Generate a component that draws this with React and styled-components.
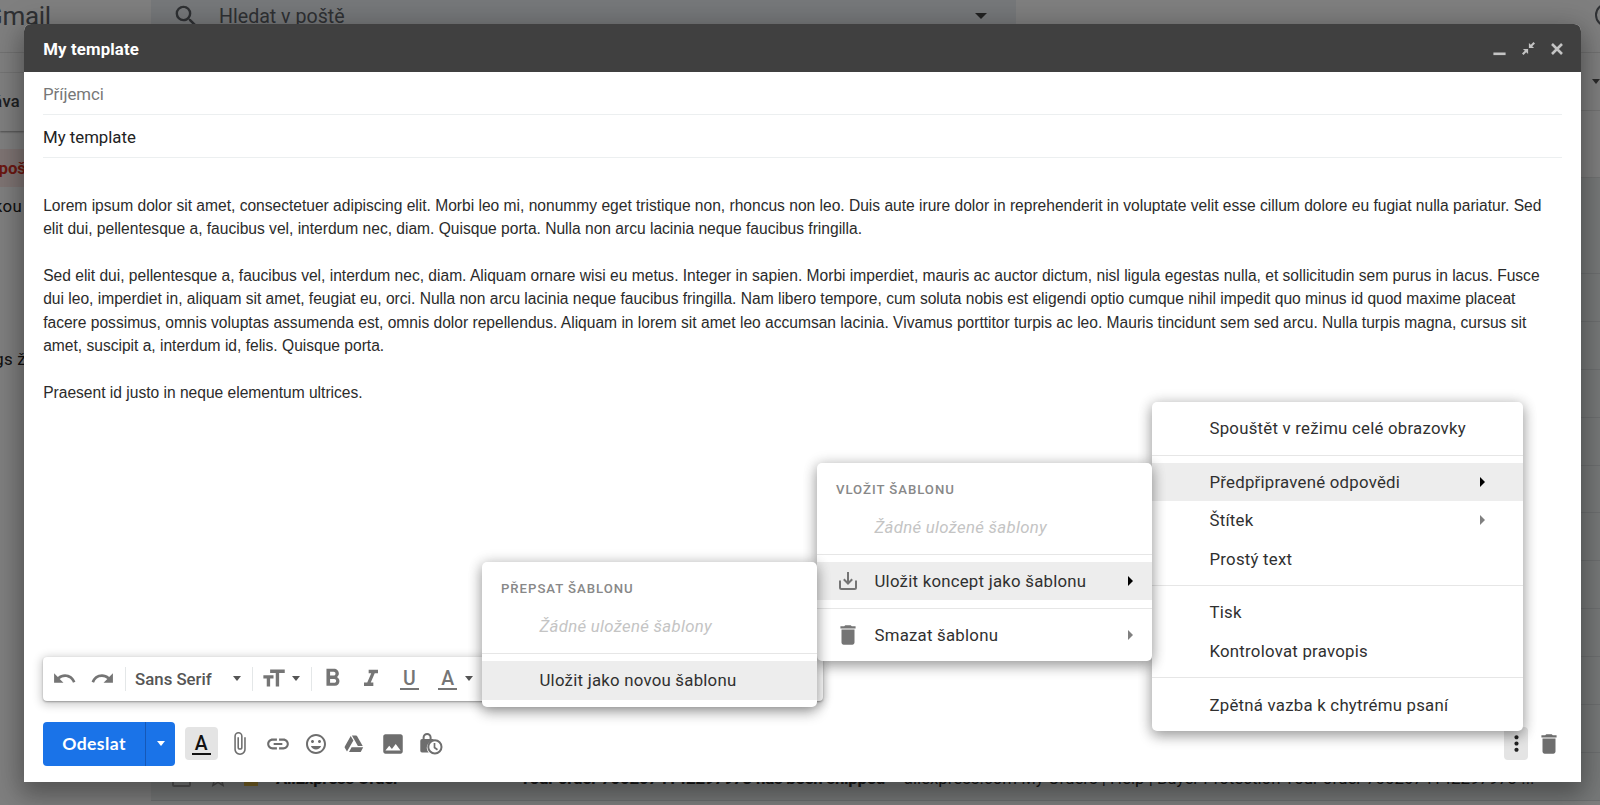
import React from 'react';
import styled, { createGlobalStyle, css } from 'styled-components';
import {
  MdAttachFile,
  MdDelete,
  MdFormatBold,
  MdFormatItalic,
  MdFormatSize,
  MdImage,
  MdInsertLink,
  MdMoreVert,
  MdOutlineInsertEmoticon,
  MdRedo,
  MdSearch,
  MdStarBorder,
  MdUndo,
} from 'react-icons/md';

const paragraphs = [
  'Lorem ipsum dolor sit amet, consectetuer adipiscing elit. Morbi leo mi, nonummy eget tristique non, rhoncus non leo. Duis aute irure dolor in reprehenderit in voluptate velit esse cillum dolore eu fugiat nulla pariatur. Sed elit dui, pellentesque a, faucibus vel, interdum nec, diam. Quisque porta. Nulla non arcu lacinia neque faucibus fringilla.',
  'Sed elit dui, pellentesque a, faucibus vel, interdum nec, diam. Aliquam ornare wisi eu metus. Integer in sapien. Morbi imperdiet, mauris ac auctor dictum, nisl ligula egestas nulla, et sollicitudin sem purus in lacus. Fusce dui leo, imperdiet in, aliquam sit amet, feugiat eu, orci. Nulla non arcu lacinia neque faucibus fringilla. Nam libero tempore, cum soluta nobis est eligendi optio cumque nihil impedit quo minus id quod maxime placeat facere possimus, omnis voluptas assumenda est, omnis dolor repellendus. Aliquam in lorem sit amet leo accumsan lacinia. Vivamus porttitor turpis ac leo. Mauris tincidunt sem sed arcu. Nulla turpis magna, cursus sit amet, suscipit a, interdum id, felis. Quisque porta.',
  'Praesent id justo in neque elementum ultrices.',
];

const DriveIcon = () => (
  <svg width="20" height="18" viewBox="0 0 20 18" fill="currentColor">
    <path d="M6.7 .9 L.8 11.4 Q.4 12 .8 12.7 L3 16.6 L9.4 5.4 Z" />
    <path d="M7.9 .5 H12.1 Q12.7 .5 13 1 L18.7 11 H13.9 Z" />
    <path d="M7.6 12.3 H19.2 L17 16.4 Q16.7 17 16 17 H5 Z" />
  </svg>
);

const LockClockIcon = () => (
  <svg width="24" height="24" viewBox="0 0 24 24" fill="none">
    <path d="M4.6 7.5V5.4a3.5 3.5 0 0 1 7 0v2.1" stroke="currentColor" strokeWidth="2" />
    <path
      fill="currentColor"
      d="M3 7h10.4q1.7 0 1.7 1.5A7.2 7.2 0 0 0 9.7 20.5H3q-1.7 0-1.7-1.7V8.7Q1.3 7 3 7Z"
    />
    <circle cx="15.9" cy="14.9" r="6.6" stroke="currentColor" strokeWidth="2" fill="#fff" />
    <path d="M15.5 11v4.500l3 2.200" stroke="currentColor" strokeWidth="1.700" />
  </svg>
);

const SaveIcon = () => (
  <svg width="20" height="20" viewBox="0 0 20 20" fill="none" stroke="currentColor" strokeWidth="2">
    <path d="M2 9.500v7q0 1.500 1.500 1.500h13q1.500 0 1.500-1.500v-7" />
    <path d="M10 1v11M5.800 8.300L10 12.500l4.200-4.200" />
  </svg>
);

const MinimizeIcon = () => (
  <svg width="13" height="14" viewBox="0 0 13 14">
    <path d="M.4 10.500h12.200v2.600H.4z" fill="currentColor" />
  </svg>
);

const ShrinkIcon = () => (
  <svg width="13" height="13" viewBox="0 0 13 13" fill="currentColor">
    <path d="M6.900 .9L8.800 2.800 11.500 0 13 1.500 10.200 4.200 12.100 6.100H6.900z" />
    <path d="M6.100 12.100L4.200 10.200 1.500 13 0 11.500 2.800 8.800 .9 6.900H6.100z" />
  </svg>
);

const CloseIcon = () => (
  <svg width="12" height="12" viewBox="0 0 12 12" stroke="currentColor" strokeWidth="2.600">
    <path d="M1 1l10 10M11 1L1 11" />
  </svg>
);

const Mailbox = () => (
  <Page>
    <TopBar>
      <Logo>Gmail</Logo>
      <SearchBar>
        <MdSearch size={29} />
        <span>Hledat v poště</span>
        <Caret />
      </SearchBar>
      <HelpCircle />
    </TopBar>
    <PageColumns>
      <Sidebar>
        <SideGap />
        <ComposeLabel>Nová zpráva</ComposeLabel>
        <Inbox>Doručená poš</Inbox>
        <SideItem>S hvězdičkou</SideItem>
        <SideItem $top={115}>Hangouts: gs ž</SideItem>
      </Sidebar>
      <List>
        <ListTools>
          <Caret />
        </ListTools>
        <Tabs />
        <TallRow />
        {Array.from({ length: 10 }).map((_, i) => (
          <MailRow key={i} />
        ))}
        <MailRow>
          <Check />
          <MdStarBorder size={24} />
          <Important />
          <Sender>AliExpress Order</Sender>
          <Subject>Your order 7002674142297973 has been shipped</Subject>
          <Snippet>
            - aliexpress.com My Orders | Help | Buyer Protection Your order 7002674142297973 ...
          </Snippet>
        </MailRow>
      </List>
    </PageColumns>
    <Scrim />
  </Page>
);

const OverwriteMenu = () => (
  <SubMenu>
    <MenuTitle>Přepsat šablonu</MenuTitle>
    <Empty>Žádné uložené šablony</Empty>
    <Separator />
    <Item $active>Uložit jako novou šablonu</Item>
  </SubMenu>
);

const TemplatesMenu = () => (
  <SubMenu>
    <MenuTitle>Vložit šablonu</MenuTitle>
    <Empty>Žádné uložené šablony</Empty>
    <Separator />
    <Item $active>
      <ItemIcon>
        <SaveIcon />
      </ItemIcon>
      Uložit koncept jako šablonu
      <Arrow $active />
      <OverwriteMenu />
    </Item>
    <Separator />
    <Item>
      <ItemIcon>
        <MdDelete size={26} />
      </ItemIcon>
      Smazat šablonu
      <Arrow />
    </Item>
  </SubMenu>
);

const OptionsMenu = () => (
  <MainMenu>
    <Item>Spouštět v režimu celé obrazovky</Item>
    <Separator />
    <Item $active>
      Předpřipravené odpovědi
      <Arrow $active $right={38} />
      <TemplatesMenu />
    </Item>
    <Item>
      Štítek
      <Arrow $right={38} />
    </Item>
    <Item>Prostý text</Item>
    <Separator />
    <Item>Tisk</Item>
    <Item>Kontrolovat pravopis</Item>
    <Separator />
    <Item>Zpětná vazba k chytrému psaní</Item>
  </MainMenu>
);

const FormatBar = () => (
  <Toolbar>
    <ToolButton>
      <MdUndo size={25} />
    </ToolButton>
    <ToolButton>
      <MdRedo size={25} />
    </ToolButton>
    <Divider $left={3} />
    <FontSelect>
      Sans Serif
      <Caret />
    </FontSelect>
    <Divider />
    <SizeSelect>
      <MdFormatSize size={27} />
      <Caret />
    </SizeSelect>
    <Divider />
    <ToolButton $left={2}>
      <MdFormatBold size={29} />
    </ToolButton>
    <ToolButton>
      <MdFormatItalic size={28} />
    </ToolButton>
    <ToolButton>
      <Letter>U</Letter>
    </ToolButton>
    <ToolButton>
      <Letter>A</Letter>
    </ToolButton>
    <ColorCaret />
  </Toolbar>
);

const Compose = () => (
  <Dialog>
    <TitleBar>
      <span>My template</span>
      <MinimizeIcon />
      <ShrinkIcon />
      <CloseIcon />
    </TitleBar>
    <Field $muted>Příjemci</Field>
    <Field>My template</Field>
    <Editor>
      {paragraphs.map((text) => (
        <p key={text}>{text}</p>
      ))}
    </Editor>
    <FormatBar />
    <Footer>
      <SendGroup>
        <SendLabel>Odeslat</SendLabel>
        <SendMore>
          <Caret $color="#fff" />
        </SendMore>
      </SendGroup>
      <Slot>
        <Pressed>
          <Letter $dark>A</Letter>
        </Pressed>
      </Slot>
      <Slot>
        <MdAttachFile size={25} />
      </Slot>
      <Slot>
        <MdInsertLink size={26} />
      </Slot>
      <Slot>
        <MdOutlineInsertEmoticon size={24} />
      </Slot>
      <Slot>
        <DriveIcon />
      </Slot>
      <Slot>
        <MdImage size={26} />
      </Slot>
      <Slot>
        <LockClockIcon />
      </Slot>
      <Spacer />
      <Pressed $narrow>
        <MdMoreVert size={25} />
      </Pressed>
      <TrashSlot>
        <MdDelete size={26} />
      </TrashSlot>
    </Footer>
    <OptionsMenu />
  </Dialog>
);

const App = () => (
  <>
    <GlobalStyle />
    <Mailbox />
    <Compose />
  </>
);

export default App;

const GlobalStyle = createGlobalStyle`
  * {
    box-sizing: border-box;
  }
  body {
    margin: 0;
    overflow: hidden;
    font-family: Roboto, sans-serif;
    color: #222;
  }
  svg {
    display: block;
    flex: none;
  }
`;

/* mailbox behind the compose window */
const Page = styled.div`
  position: relative;
  display: flex;
  flex-direction: column;
  height: 805px;
  overflow: hidden;
  background: #fff;
`;
const Scrim = styled.div`
  position: absolute;
  inset: 0;
  background: rgba(0, 0, 0, 0.5);
`;
const TopBar = styled.div`
  display: flex;
  align-items: flex-start;
  height: 53px;
  flex: none;
  border-bottom: 1px solid #e4e4e4;
`;
const Logo = styled.div`
  width: 151px;
  flex: none;
  font-size: 26px;
  line-height: 32px;
  letter-spacing: -0.3px;
  text-indent: -15px;
  color: #5f6368;
`;
const Caret = styled.i`
  flex: none;
  border: 4.6px solid transparent;
  border-top: 5.2px solid ${(props) => props.$color || '#555'};
  border-bottom: 0;
`;
const ColorCaret = styled(Caret)`
  margin-left: -2px;
`;
const SearchBar = styled.div`
  display: flex;
  align-items: center;
  flex: none;
  width: 865px;
  height: 46px;
  margin-top: -7px;
  padding: 0 29px 0 20px;
  background: #ecf0f4;
  color: #5f6368;
  font-size: 19.6px;
  svg {
    margin-left: 1px;
  }
  span {
    flex: 1;
    margin-left: 18px;
  }
  i {
    border-width: 6px 6px 0;
    border-top-color: #444;
  }
`;
const HelpCircle = styled.div`
  width: 24px;
  height: 24px;
  flex: none;
  margin: 3px 0 0 579px;
  border: 2px solid #5f6368;
  border-radius: 50%;
`;
const PageColumns = styled.div`
  display: flex;
  flex: 1;
`;
const Sidebar = styled.div`
  width: 151px;
  flex: none;
`;
const SideGap = styled.div`
  height: 20px;
  border-bottom: 1px solid #f0f0f0;
`;
const sideLabel = css`
  display: flex;
  justify-content: flex-end;
  align-items: center;
  white-space: nowrap;
`;
const ComposeLabel = styled.div`
  ${sideLabel}
  width: 24px;
  height: 58px;
  padding: 0 4px 2px 0;
  color: #3c4043;
  font-size: 16.5px;
  font-weight: 500;
  letter-spacing: 0.3px;
  box-shadow: 0 1px 2px rgba(0, 0, 0, 0.4);
`;
const Inbox = styled.div`
  ${sideLabel}
  width: 26px;
  height: 38px;
  margin-top: 18px;
  background: #fce8e6;
  color: #d93025;
  font-size: 16.8px;
  font-weight: 700;
`;
const SideItem = styled.div`
  ${sideLabel}
  width: ${(props) => (props.$top ? 26 : 22)}px;
  height: 38px;
  margin-top: ${(props) => props.$top || 0}px;
  font-size: 16.8px;
  letter-spacing: 0.3px;
`;
const List = styled.div`
  flex: 1;
`;
const ListTools = styled.div`
  display: flex;
  justify-content: flex-end;
  align-items: center;
  height: 58px;
  border-bottom: 1px solid #e6e6e6;
`;
const Tabs = styled.div`
  height: 67px;
  border-bottom: 1px solid #e2e4e4;
`;
const TallRow = styled.div`
  height: 96px;
  background: #eef2f2;
  border-bottom: 1px solid #dbdfe1;
`;
const MailRow = styled.div`
  display: flex;
  align-items: center;
  height: 47.9px;
  padding: 3px 0 0 21px;
  background: #eef2f2;
  border-bottom: 1px solid #dbdfe1;
  font-size: 16.8px;
  white-space: nowrap;
  color: #333;
  svg {
    margin: 0 0 0 15px;
    color: #999;
  }
`;
const Check = styled.div`
  width: 19px;
  height: 19px;
  flex: none;
  border: 2px solid #aaa;
  border-radius: 2px;
`;
const Important = styled.div`
  width: 14px;
  height: 13px;
  flex: none;
  margin: 3px 18px 0 14px;
  background: #f7cb4d;
`;
const Sender = styled.b`
  width: 244px;
  flex: none;
  letter-spacing: -0.2px;
`;
const Subject = styled.b`
  flex: none;
  width: 375px;
  letter-spacing: -0.2px;
`;
const Snippet = styled.span`
  flex: none;
`;

/* compose window */
const Dialog = styled.div`
  position: absolute;
  top: 24px;
  left: 24px;
  display: flex;
  flex-direction: column;
  width: 1557px;
  height: 758px;
  background: #fff;
  border-radius: 7px 7px 0 0;
  box-shadow: 0 12px 24px 3px rgba(0, 0, 0, 0.26), 0 2px 30px 4px rgba(0, 0, 0, 0.14);
`;
const TitleBar = styled.div`
  display: flex;
  align-items: center;
  height: 48px;
  flex: none;
  padding: 1px 18px 0 19.2px;
  background: #404040;
  border-radius: 7px 7px 0 0;
  color: #fff;
  font-size: 16.8px;
  font-weight: 700;
  span {
    flex: 1;
    letter-spacing: 0.15px;
  }
  svg {
    margin-left: 16px;
    color: #c4c4c4;
  }
`;
const Field = styled.div`
  display: flex;
  align-items: center;
  height: 43px;
  flex: none;
  margin: 0 19px;
  padding-top: 2px;
  border-bottom: 1px solid #eceff0;
  font-size: 16.8px;
  color: ${(props) => (props.$muted ? '#777' : '#222')};
`;
const Editor = styled.div`
  flex: 1;
  padding: 36px 19px 0 19.2px;
  font-family: Arial, 'Liberation Sans', sans-serif;
  font-size: 15.6px;
  line-height: 23.33px;
  letter-spacing: -0.01px;
  color: #2b2b2b;
  p {
    margin: 0 0 23.33px;
  }
`;
const Toolbar = styled.div`
  display: flex;
  align-items: center;
  width: 780px;
  height: 43.5px;
  flex: none;
  margin-left: 19px;
  padding-left: 2px;
  border-radius: 4px;
  background: #fff;
  color: #757575;
  box-shadow: 0 1px 2px rgba(0, 0, 0, 0.3), 0 2px 10px 2px rgba(0, 0, 0, 0.2);
`;
const ToolButton = styled.div`
  display: flex;
  justify-content: center;
  align-items: center;
  width: 38.3px;
  margin-left: ${(props) => props.$left || 0}px;
`;
const Divider = styled.div`
  width: 1px;
  height: 24px;
  margin-left: ${(props) => props.$left || 0}px;
  background: #e4e7e8;
`;
const FontSelect = styled.div`
  display: flex;
  align-items: center;
  justify-content: space-between;
  width: 126px;
  padding: 0 11px 0 9.5px;
  font-size: 16.8px;
  font-weight: 500;
  color: #555;
`;
const SizeSelect = styled.div`
  display: flex;
  align-items: center;
  justify-content: space-between;
  width: 58px;
  padding: 0 11px 0 7px;
`;
const Letter = styled.span`
  width: 18.8px;
  height: 19px;
  margin-top: 3px;
  border-bottom: 2px solid;
  font-size: 19.4px;
  line-height: 15px;
  font-weight: 500;
  text-align: center;
  color: ${(props) => (props.$dark ? '#111' : '#757575')};
`;
const Footer = styled.div`
  display: flex;
  align-items: center;
  flex: none;
  height: 43.5px;
  margin: 21.5px 0 16.5px;
  padding: 0 19px;
  color: #6e6e6e;
`;
const SendGroup = styled.div`
  display: flex;
  width: 132px;
  height: 100%;
  margin-right: 7px;
  border-radius: 4px;
  background: #1a73e8;
  color: #fff;
`;
const SendLabel = styled.div`
  display: flex;
  justify-content: center;
  align-items: center;
  width: 103px;
  padding-bottom: 1px;
  border-right: 1px solid #1558b8;
  font-family: Lato, sans-serif;
  font-size: 17.6px;
  font-weight: 700;
  letter-spacing: 0.4px;
`;
const SendMore = styled.div`
  display: flex;
  flex: 1;
  justify-content: center;
  align-items: center;
`;
const Slot = styled.div`
  display: flex;
  justify-content: center;
  align-items: center;
  width: 38.3px;
`;
const Pressed = styled.div`
  display: flex;
  justify-content: center;
  align-items: center;
  width: ${(props) => (props.$narrow ? 24 : 33)}px;
  height: 33px;
  border-radius: 4px;
  background: #e4e4e4;
  color: #222;
`;
const Spacer = styled.div`
  flex: 1;
`;
const TrashSlot = styled.div`
  margin-left: 8px;
`;

/* menus */
const menuBox = css`
  position: absolute;
  padding: 7px 0 7.2px;
  background: #fff;
  border-radius: 5px;
  box-shadow: 0 5px 14px rgba(0, 0, 0, 0.3), 0 1px 14px 1px rgba(0, 0, 0, 0.16);
`;
const MainMenu = styled.div`
  ${menuBox}
  top: 378px;
  right: 58px;
  width: 371px;
`;
const SubMenu = styled.div`
  ${menuBox}
  top: 0;
  right: 100%;
  width: 335px;
`;
const Item = styled.div`
  position: relative;
  display: flex;
  align-items: center;
  height: 38.3px;
  padding-left: 57.5px;
  background: ${(props) => (props.$active ? '#ededed' : 'transparent')};
  color: #303030;
  font-size: 16.8px;
  letter-spacing: 0.24px;
  white-space: nowrap;
`;
const ItemIcon = styled.span`
  display: flex;
  justify-content: center;
  width: 26px;
  margin: 0 13.5px 0 -39.5px;
  color: #757575;
`;
const Arrow = styled.i`
  margin-left: auto;
  margin-right: ${(props) => props.$right || 18.7}px;
  border: 5px solid transparent;
  border-left-color: ${(props) => (props.$active ? '#000' : '#808080')};
  border-right: 0;
`;
const MenuTitle = styled.div`
  display: flex;
  align-items: center;
  height: 38.3px;
  padding-left: 19px;
  color: #888;
  font-size: 13.2px;
  font-weight: 500;
  letter-spacing: 0.95px;
  text-transform: uppercase;
`;
const Empty = styled(Item)`
  color: #c4c4c4;
  font-style: italic;
  letter-spacing: 0.3px;
`;
const Separator = styled.div`
  height: 1px;
  margin: 7.4px 0 7.2px;
  background: #e6e6e6;
`;
